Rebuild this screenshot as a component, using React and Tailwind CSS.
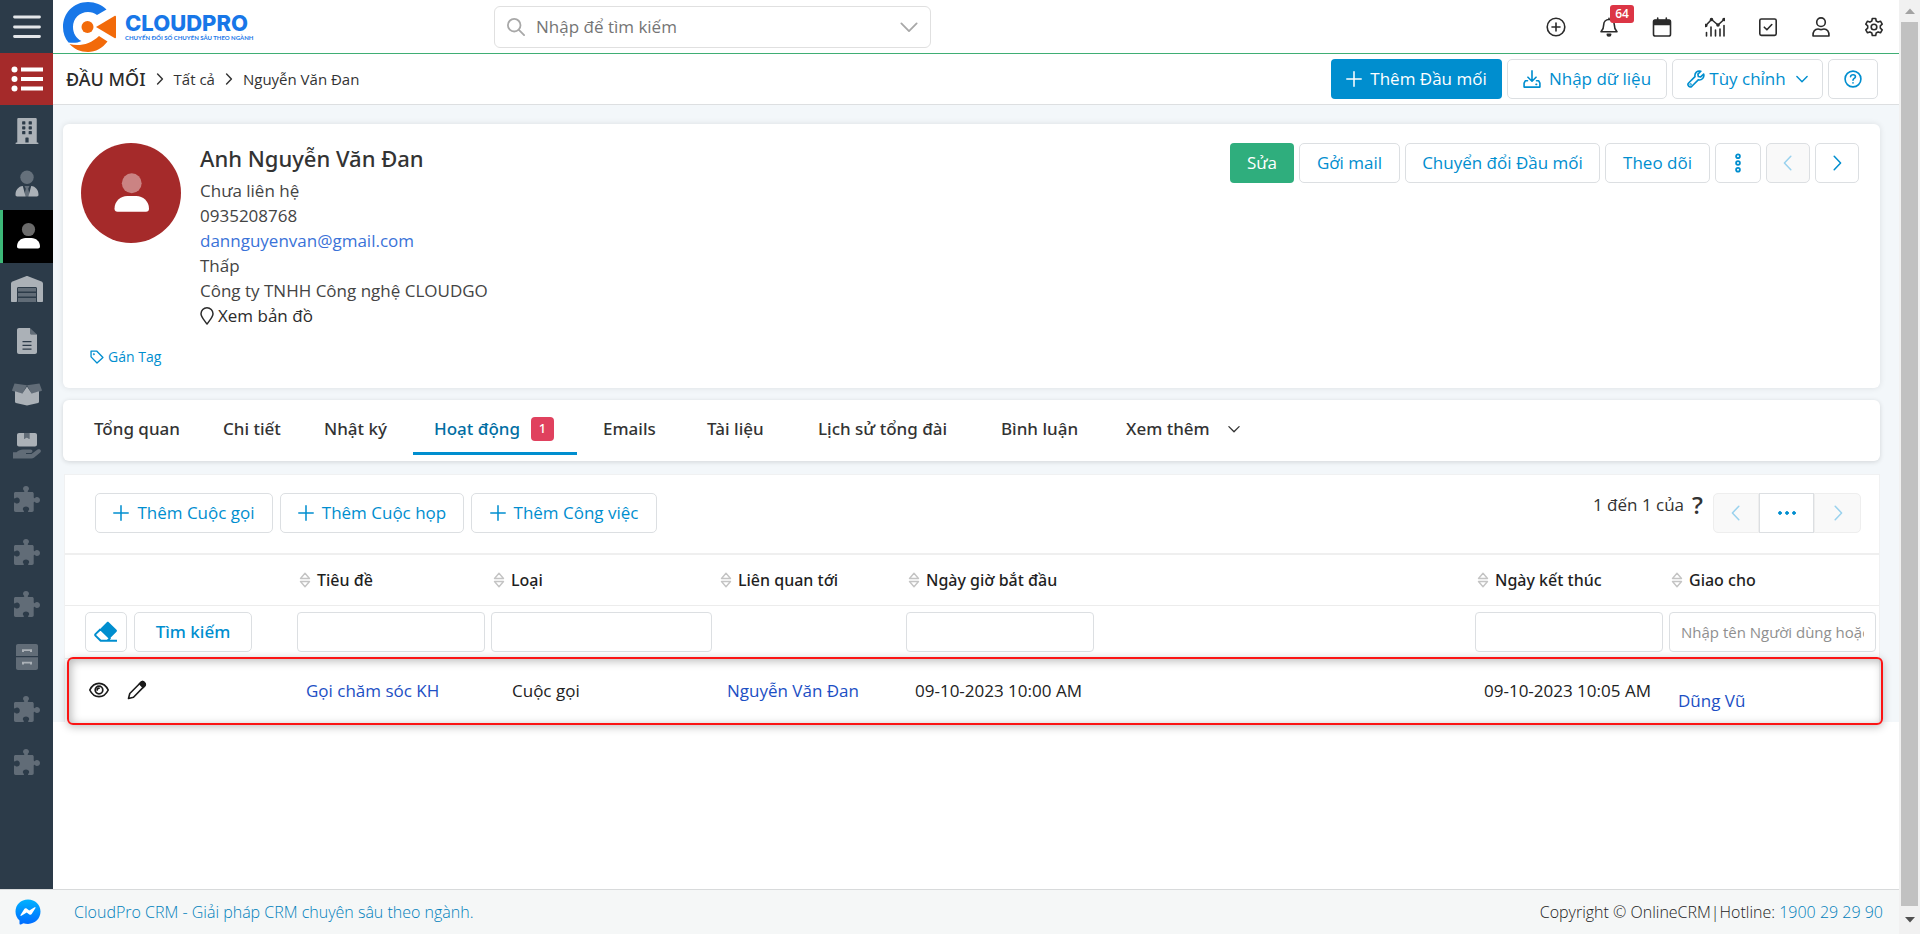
import { FaBuilding } from "react-icons/fa";

/* ---------- icons ---------- */

function Line({ size = "size-5", width = 1.6, children }) {
  return (
    <svg
      viewBox="0 0 20 20"
      className={`${size} shrink-0`}
      fill="none"
      stroke="currentColor"
      strokeWidth={width}
      strokeLinecap="round"
      strokeLinejoin="round"
      aria-hidden="true"
    >
      {children}
    </svg>
  );
}

const Plus = () => (
  <Line size="size-4" width={1.9}>
    <path d="M10 1v18M1 10h18" />
  </Line>
);
const ChevronDown = ({ size = "size-3", width = 2.4 }) => (
  <Line size={size} width={width}>
    <path d="M1.500 6l8.500 8.500L18.500 6" />
  </Line>
);
const ChevronLeft = () => (
  <Line size="size-4" width={1.9}>
    <path d="M13.500 1.500L5.500 10l8 8.500" />
  </Line>
);
const ChevronRight = () => (
  <Line size="size-4" width={1.9}>
    <path d="M6.500 1.500l8 8.500-8 8.500" />
  </Line>
);

const Person = ({ size = "size-7" }) => (
  <svg viewBox="0 0 28 28" className={size} fill="currentColor" aria-hidden="true">
    <circle cx="14.500" cy="7.500" r="6.600" opacity="0.42" />
    <path d="M3 24.500c0-5 4-8.500 8.500-8.500h6c4.500 0 8.500 3.500 8.500 8.500 0 1.300-.8 2-2 2H5c-1.200 0-2-.7-2-2z" />
  </svg>
);
const Tie = () => (
  <svg viewBox="0 0 28 28" className="size-7" fill="currentColor" aria-hidden="true">
    <circle cx="14" cy="7.300" r="6.700" opacity="0.45" />
    <path d="M11.500 16h5l-1.300 2.800 1.500 6.200-1.200 1.500h-3L11.300 25l1.500-6.200z" opacity="0.45" />
    <path d="M9.800 16l2.800 10.500H4.200c-1.100 0-1.700-.7-1.700-1.700 0-5 3-8.400 7.300-8.800zM18.200 16l-2.800 10.500h8.400c1.100 0 1.700-.7 1.700-1.700 0-5-3-8.400-7.300-8.800z" />
  </svg>
);
const Warehouse = () => (
  <svg viewBox="0 0 34 28" className="h-7 w-[34px]" fill="currentColor" aria-hidden="true">
    <path d="M1 8.800c0-1 .6-1.800 1.500-2.200L16 1.200c.6-.3 1.400-.3 2 0l13.500 5.400c.9.400 1.500 1.200 1.500 2.200V26c0 .6-.4 1-1 1h-4c-.6 0-1-.4-1-1V13.500c0-.8-.6-1.500-1.500-1.500H8.500C7.600 12 7 12.700 7 13.500V26c0 .6-.4 1-1 1H2c-.6 0-1-.4-1-1z" />
    <path d="M8 13h18v3.500H8zM8 18h18v3.500H8zM8 23h18v4H8z" opacity="0.42" />
  </svg>
);
const Document = () => (
  <svg viewBox="0 0 22 28" className="h-7 w-[22px]" fill="currentColor" aria-hidden="true">
    <path d="M3 1h11v5c0 .9.700 1.500 1.500 1.500H21V25c0 1.200-.8 2-2 2H3c-1.200 0-2-.8-2-2V3c0-1.200.8-2 2-2zm3.500 13v1.300h9V14zm0 3.700V19h9v-1.300zm0 3.700v1.300h9v-1.300z" />
    <path d="M14 1l7 6.500h-5.500C14.700 7.500 14 6.900 14 6z" opacity="0.42" />
  </svg>
);
const BoxOpen = () => (
  <svg viewBox="0 0 34 26" className="h-6 w-[34px]" fill="currentColor" aria-hidden="true">
    <path d="M4 10l8 2.500L17 5l5 7.500 8-2.500v11.500c0 .6-.4 1-1 1.200L17 25.500 5 22.700c-.6-.2-1-.6-1-1.200z" />
    <path d="M3.500 1.500L17 3.500l-4.500 8.500c-.3.500-.8.700-1.300.5L1.500 9.800c-.6-.2-.8-.7-.6-1.200zM30.500 1.500L17 3.500l4.500 8.500c.3.500.8.700 1.300.5l9.700-2.700c.6-.2.800-.7.600-1.200z" opacity="0.42" />
  </svg>
);
const HandBox = () => (
  <svg viewBox="0 0 30 28" className="h-7 w-[30px]" fill="currentColor" aria-hidden="true">
    <path d="M7 1h5v6l2.700-1.600L17.500 7V1H23c1.200 0 2 .8 2 2v9.500c0 1.200-.8 2-2 2H7c-1.200 0-2-.8-2-2V3c0-1.200.8-2 2-2z" />
    <path d="M12 1h5.500v6l-2.800-1.600L12 7z" opacity="0.42" />
    <path d="M1 20.300h3.500c2-1.800 4-2.800 6.500-2.800h7.500c2.600 0 2.600 3.500 0 3.500H14v.9h5.500l6-4.300c2.500-1.300 4.500 1 2.700 2.900l-6 5c-.8.700-1.800 1-3 1H1z" opacity="0.42" />
  </svg>
);
const Cabinet = () => (
  <svg viewBox="0 0 26 28" className="h-7 w-[26px]" fill="currentColor" aria-hidden="true">
    <path d="M4 1h18c1.200 0 2 .8 2 2v10H2V3c0-1.200.8-2 2-2zM2 14.200h22V25c0 1.200-.8 2-2 2H4c-1.200 0-2-.8-2-2z" opacity="0.42" />
    <path d="M8 6.200h10V9h-2V8h-6v1H8zM8 18.700h10v2.800h-2v-1h-6v1H8z" />
  </svg>
);
const Puzzle = () => (
  <svg viewBox="0 0 26 26" className="size-[26px]" fill="currentColor" aria-hidden="true">
    <path d="M1.500 6H9.500c.8 0 1-.6.600-1.200C9.400 4.200 9 3.600 9 2.800 9 1.200 10.200 0 12 0s3 1.200 3 2.800c0 .8-.4 1.400-1.100 2-.4.600-.2 1.200.6 1.200H18c1 0 1.700.7 1.700 1.700v3.600c0 .8.600 1.100 1.200.6.600-.6 1.200-1 2-1 1.800 0 3.100 1.300 3.100 3.100s-1.300 3.100-3.100 3.100c-.8 0-1.400-.4-2-1-.6-.5-1.200-.2-1.200.6v7.600c0 1-.7 1.700-1.700 1.700h-3.200c-.8 0-1-.6-.5-1.200.5-.5.900-1 .9-1.700 0-1.500-1.400-2.500-3.200-2.500s-3.200 1-3.200 2.500c0 .7.400 1.200.9 1.700.5.600.3 1.200-.5 1.200H1.700C.7 26 0 25.300 0 24.300v-7c0-.8.600-1 1.200-.6.500.5 1 .9 1.900.9 1.600 0 2.700-1.300 2.700-3.100s-1.100-3.100-2.700-3.100c-.9 0-1.400.4-1.900.900-.6.500-1.200.2-1.200-.6V7.500C0 6.700.7 6 1.500 6z" opacity="0.42" />
  </svg>
);

const NAV = [
  ["Tổ chức", <FaBuilding className="size-[26px]" />],
  ["Người liên hệ", <Tie />],
  ["Đầu mối", <Person />],
  ["Kho", <Warehouse />],
  ["Báo giá", <Document />],
  ["Sản phẩm", <BoxOpen />],
  ["Dịch vụ", <HandBox />],
  ["Tiện ích 1", <Puzzle />],
  ["Tiện ích 2", <Puzzle />],
  ["Tiện ích 3", <Puzzle />],
  ["Lưu trữ", <Cabinet />],
  ["Tiện ích 4", <Puzzle />],
  ["Tiện ích 5", <Puzzle />],
];

const TOOLS = [
  ["Tạo nhanh", <><circle cx="10" cy="10" r="8.800" /><path d="M10 6v8M6 10h8" /></>],
  ["Thông báo", <><path d="M10 1.200v1.300M10 2.500c-3.200 0-5.300 2.300-5.300 5.300 0 4.200-1.300 5.300-2.700 6.900h16c-1.400-1.600-2.700-2.700-2.700-6.900 0-3-2.100-5.300-5.300-5.300z" /><path d="M8.300 17.300h3.400a1.700 1.700 0 0 1-3.400 0z" fill="currentColor" /></>],
  ["Lịch", <><rect x="1.500" y="3" width="17" height="16" rx="1.800" /><path d="M2 3.500h16v4H2z" fill="currentColor" /><path d="M5.700 1v2M14.300 1v2" /></>],
  ["Báo cáo", <><path d="M.8 8.500l5.700-6 6.500 5.500 6-5.500M1.500 15.500V19M6 10v9M10.500 13v6M15 12v7M19 8.500V19" /><circle cx=".8" cy="8.500" r="1" fill="currentColor" /><circle cx="6.500" cy="2.500" r="1" fill="currentColor" /><circle cx="13" cy="8" r="1" fill="currentColor" /><circle cx="19" cy="2.500" r="1" fill="currentColor" /></>],
  ["Công việc", <><rect x="1.800" y="2" width="16.400" height="16.400" rx="1.600" /><path d="M6.300 10.200l2.600 2.600L13.800 7.500" /></>],
  ["Tài khoản", <><circle cx="10" cy="5.200" r="4.300" /><path d="M2 19c-.3-4.500 2-7 5-7 1 0 1.500.6 3 .6s2-.6 3-.6c3 0 5.300 2.500 5 7z" /></>],
  ["Cài đặt", <><path d="M8.300 1h3.400l.5 2.500 1.900 1.100 2.400-.9 1.700 3-1.900 1.700v2.200l1.900 1.700-1.700 3-2.400-.9-1.900 1.100-.5 2.500H8.300l-.5-2.500-1.900-1.100-2.400.9-1.700-3 1.900-1.700V8.400L1.800 6.700l1.700-3 2.400.9 1.900-1.100z" transform="translate(0 .5)" /><circle cx="10" cy="10" r="2.800" /></>],
];

function Logo() {
  return (
    <a href="#home" className="flex items-center gap-2" aria-label="CloudPro">
      <svg viewBox="0 0 54 52" className="h-[52px] w-[54px]" aria-hidden="true">
        <path d="M25 1C10.500 1 0 12 0 26c0 6 2 11.500 5.500 15.500 5 .8 9.500.3 13-1.500C13 37.500 10 32 10 26c0-8.500 6.500-15 15-15 3.500 0 6.500 1.200 9 3l9.500-5.500C38.500 3.800 32.500 1 25 1z" fill="#1877e8" />
        <path d="M6.500 43c9 2.600 20.500.7 29.500-8l8.500 5.500C39.500 47 32.500 51 25 51c-7.500 0-14-3-18.500-8z" fill="#f26a0a" />
        <path d="M33 26L51.500 15c.9-.5 1.500-.1 1.500.8v20.400c0 .9-.6 1.300-1.500.8z" fill="#f26a0a" />
        <circle cx="24.500" cy="26" r="6" fill="#f26a0a" />
      </svg>
      <span className="flex flex-col text-[#1877e8]">
        <span className="font-[Inter,sans-serif] text-[22px] leading-[22px] font-extrabold">CLOUDPRO</span>
        <span className="font-[Lato,sans-serif] text-[6px] leading-[8px] font-bold whitespace-nowrap">CHUYỂN ĐỔI SỐ CHUYÊN SÂU THEO NGÀNH</span>
      </span>
    </a>
  );
}

/* ---------- controls ---------- */

function Btn({ className = "", children, ...rest }) {
  return (
    <button
      type="button"
      className={`flex h-10 items-center justify-center rounded-[5px] border border-[#dcdfe2] bg-white text-[17px] whitespace-nowrap text-[#008ecf] disabled:bg-[#f9f9f9] disabled:text-[#9ad2ee] ${className}`}
      {...rest}
    >
      {children}
    </button>
  );
}

const SortIcon = () => (
  <svg viewBox="0 0 12 16" className="h-4 w-3 shrink-0" fill="none" stroke="#c4c4c4" strokeWidth="1.400" strokeLinejoin="round" aria-hidden="true">
    <path d="M1.500 6.500L6 1.200l4.500 5.300zM1.500 9.500L6 14.800l4.500-5.300z" />
  </svg>
);

const TABS = [
  ["Tổng quan", "w-[129px]"],
  ["Chi tiết", "w-[101px]"],
  ["Nhật ký", "w-[110px]"],
  ["Hoạt động", "w-[164px]"],
  ["Emails", "ml-[5px] w-[104px]"],
  ["Tài liệu", "w-[111px]"],
  ["Lịch sử tổng đài", "w-[183px]"],
  ["Bình luận", "w-[125px]"],
  ["Xem thêm", "w-[160px]"],
];

const COLUMNS = [
  ["Tiêu đề", "full"],
  ["Loại", "full"],
  ["Liên quan tới", null],
  ["Ngày giờ bắt đầu", "narrow"],
  ["Ngày kết thúc", "full"],
  ["Giao cho", "full"],
];

function Sidebar() {
  return (
    <aside className="flex w-[53px] shrink-0 flex-col bg-[#2c3b49]">
      <button type="button" aria-label="Mở menu" className="flex h-[53px] items-center justify-center text-[#e3e6e9]">
        <svg viewBox="0 0 28 24" className="h-6 w-7" stroke="currentColor" strokeWidth="2.800" strokeLinecap="round" aria-hidden="true">
          <path d="M1.500 2h25M1.500 12h25M1.500 21.500h25" />
        </svg>
      </button>
      <button type="button" aria-label="Danh sách" className="flex h-[52px] items-center justify-center bg-[#a52a2a] text-white">
        <svg viewBox="0 0 32 26" className="h-[26px] w-8" fill="currentColor" aria-hidden="true">
          <circle cx="3.500" cy="3.500" r="3" />
          <circle cx="3.500" cy="13" r="3" />
          <circle cx="3.500" cy="22.500" r="3" />
          <path d="M10 1.500h22v4H10zM10 11h22v4H10zM10 20.500h22v4H10z" />
        </svg>
      </button>
      <nav className="grid h-[683px] auto-rows-fr" aria-label="Phân hệ">
        {NAV.map(([label, icon]) => (
          <a
            key={label}
            href="#module"
            aria-label={label}
            className={
              label === "Đầu mối"
                ? "flex items-center justify-center border-l-[3px] border-[#3cb878] bg-black text-white"
                : "flex items-center justify-center text-[#abb1b7]"
            }
          >
            {icon}
          </a>
        ))}
      </nav>
    </aside>
  );
}

function TopBar() {
  return (
    <header className="flex h-[54px] items-center border-b border-[#3fae74] bg-white pr-[9px] pl-[10px]">
      <div className="w-[431px] shrink-0">
        <Logo />
      </div>
      <label className="flex h-[42px] w-[437px] items-center rounded-[6px] border border-[#e0e0e0] px-3 text-[#a8a8a8]">
        <Line size="size-[18px]" width={2}>
          <circle cx="8" cy="8" r="7" />
          <path d="M13.200 13.200L19 19" />
        </Line>
        <input aria-label="Tìm kiếm toàn hệ thống" placeholder="Nhập để tìm kiếm" className="ml-[11px] h-10 min-w-0 flex-1 text-[17px] outline-none placeholder:text-[#757575]" />
        <ChevronDown size="size-[18px]" width={2} />
      </label>
      <div className="ml-auto flex items-center gap-[21px] text-[#2b2b2b]">
        {TOOLS.map(([label, art]) => (
          <button key={label} type="button" aria-label={label} className="relative flex w-8 justify-center">
            <Line>{art}</Line>
            {label === "Thông báo" && (
              <span className="absolute -top-3 left-[17px] flex h-[18px] w-6 items-center justify-center rounded-[3px] bg-[#dc3545] text-[12px] leading-[18px] font-semibold text-white">
                64
              </span>
            )}
          </button>
        ))}
      </div>
    </header>
  );
}

function TitleBar() {
  return (
    <div className="flex h-[51px] items-center border-b border-[#dddfe1] bg-white pr-[21px] pl-[13px]">
      <nav aria-label="Đường dẫn" className="flex items-center text-[15px] text-[#333]">
        <h1 className="font-['Noto_Sans',sans-serif] text-[18px] font-medium text-[#2b2b2b]">ĐẦU MỐI</h1>
        <span className="mx-2 flex"><Line size="size-3" width={2.4}><path d="M6 1.500l8 8.500-8 8.500" /></Line></span>
        <a href="#all">Tất cả</a>
        <span className="mx-2 flex"><Line size="size-3" width={2.4}><path d="M6 1.500l8 8.500-8 8.500" /></Line></span>
        <a href="#record">Nguyễn Văn Đan</a>
      </nav>
      <div className="ml-auto flex gap-[5px]">
        <button type="button" className="flex h-10 w-[171px] items-center justify-center gap-2 rounded-[4px] bg-[#008ecf] text-[17px] text-white">
          <Plus /> Thêm Đầu mối
        </button>
        <Btn className="w-[160px] gap-2">
          <Line size="size-[18px]" width={1.8}>
            <path d="M10 1v11M5.500 8l4.500 4.500L14.500 8M5 12H2.500L1.200 14.500V19h17.600v-4.500L17.500 12H15M14.500 16h.6" />
          </Line>
          Nhập dữ liệu
        </Btn>
        <Btn className="w-[151px] gap-1">
          <Line size="size-[18px]" width={1.8}>
            <path d="M18.500 4.500l-3.300 3.200-2.600-.4-.5-2.700L15.400 1.400c-3.800-1.200-7.300 2-6.500 5.900L1.800 14.400c-2.200 2.500 1.200 5.800 3.600 3.700l7.100-7.100c3.900.8 7.200-2.700 6-6.500z" />
            <circle cx="4" cy="16" r=".4" />
          </Line>
          Tùy chỉnh
          <span className="ml-1.5 flex"><ChevronDown /></span>
        </Btn>
        <Btn className="w-[50px]" aria-label="Trợ giúp">
          <Line size="size-[18px]" width={1.8}>
            <circle cx="10" cy="10" r="8.800" />
            <path d="M7.300 7.500c.3-3 5.400-2.900 5.400 0 0 1.800-2.700 2-2.700 3.800M10 14.200v.2" />
          </Line>
        </Btn>
      </div>
    </div>
  );
}

function Summary() {
  return (
    <section className="flex flex-col rounded-[6px] bg-white pt-[19px] pr-[21px] pb-[19px] pl-[18px] shadow-[0_0_6px_rgba(0,0,0,0.1)]">
      <div className="flex items-start">
        <div className="flex size-[100px] shrink-0 items-center justify-center rounded-full bg-[#a52a2a] text-white">
          <Person size="size-[42px]" />
        </div>
        <div className="ml-[19px] text-[17px] leading-[25px] text-[#444]">
          <h2 className="mb-[5px] font-['Noto_Sans',sans-serif] text-[22px] leading-[30px] font-medium text-[#333]">Anh Nguyễn Văn Đan</h2>
          <p>Chưa liên hệ</p>
          <p>0935208768</p>
          <p><a href="mailto:dannguyenvan@gmail.com" className="text-[#3a72d8]">dannguyenvan@gmail.com</a></p>
          <p>Thấp</p>
          <p>Công ty TNHH Công nghệ CLOUDGO</p>
          <a href="#map" className="flex items-center gap-1 text-[#2b2b2b]">
            <svg viewBox="0 0 14 18" className="h-[18px] w-[14px]" fill="none" stroke="currentColor" strokeWidth="1.500" strokeLinejoin="round" aria-hidden="true">
              <path d="M7 17C4 12.800 1 10 1 6.800a6 6 0 0 1 12 0C13 10 10 12.800 7 17z" />
            </svg>
            Xem bản đồ
          </a>
        </div>
        <div className="ml-auto flex gap-[5px]">
          <button type="button" className="flex h-10 w-16 items-center justify-center rounded-[4px] bg-[#2fae7d] text-[17px] text-white">Sửa</button>
          <Btn className="w-[101px]">Gởi mail</Btn>
          <Btn className="w-[195px]">Chuyển đổi Đầu mối</Btn>
          <Btn className="w-[105px]">Theo dõi</Btn>
          <Btn className="w-[46px]" aria-label="Thêm thao tác">
            <Line size="size-5" width={1.8}>
              <circle cx="10" cy="3.200" r="1.900" />
              <circle cx="10" cy="10" r="1.900" />
              <circle cx="10" cy="16.800" r="1.900" />
            </Line>
          </Btn>
          <Btn className="w-[44px]" disabled aria-label="Bản ghi trước"><ChevronLeft /></Btn>
          <Btn className="w-[44px]" aria-label="Bản ghi sau"><ChevronRight /></Btn>
        </div>
      </div>
      <button type="button" className="mt-[17px] ml-[9px] flex items-center gap-1 self-start text-[14px] leading-6 text-[#008ecf]">
        <Line size="size-[14px]" width={1.9}>
          <path d="M1.500 1.500v8.300l8.500 8.700 8.500-7.700-9-9.300z" />
          <circle cx="5.500" cy="6" r=".5" />
        </Line>
        Gán Tag
      </button>
    </section>
  );
}

function Tabs() {
  return (
    <div role="tablist" className="flex h-[61px] rounded-[6px] bg-white pt-[5px] pl-[10px] shadow-[0_1px_5px_rgba(0,0,0,0.14)]">
      {TABS.map(([label, width]) => {
        const active = label === "Hoạt động";
        return (
          <button
            key={label}
            type="button"
            role="tab"
            aria-selected={active}
            className={`flex h-[50px] shrink-0 items-center border-b-[3px] pl-[21px] font-['Noto_Sans',sans-serif] text-[17px] font-medium whitespace-nowrap ${width} ${
              active ? "border-[#008ecf] text-[#006ea3]" : "border-transparent text-[#333]"
            }`}
          >
            {label}
            {active && <span className="ml-[11px] flex h-6 w-[23px] items-center justify-center rounded-[4px] bg-[#e0415e] text-[13px] text-white">1</span>}
            {label === "Xem thêm" && <span className="ml-[18px] flex"><ChevronDown width={2.2} /></span>}
          </button>
        );
      })}
    </div>
  );
}

function Activities() {
  const field = "block h-10 w-full rounded-[4px] border border-[#dcdfe2] bg-white px-[11px] text-[15px] outline-none placeholder:text-[#8f8f8f]";
  return (
    <section className="relative ml-px border border-[#f0f1f2] border-b-0 bg-white">
      <div className="flex h-[78px] items-start pt-[18px] pr-[18px] pl-[30px]">
        <div className="flex gap-[7px]">
          <Btn className="w-[178px] gap-2"><Plus /> Thêm Cuộc gọi</Btn>
          <Btn className="w-[184px] gap-2"><Plus /> Thêm Cuộc họp</Btn>
          <Btn className="w-[186px] gap-2"><Plus /> Thêm Công việc</Btn>
        </div>
        <div className="ml-auto flex items-start">
          <p className="flex items-center gap-2 pr-[10px] text-[17px] leading-6 text-[#333]">
            1 đến 1 của <b className="text-[24px] leading-6 font-semibold">?</b>
          </p>
          <div className="flex">
            <Btn className="w-[46px] rounded-r-none border-[#eeeeee]" disabled aria-label="Trang trước"><ChevronLeft /></Btn>
            <Btn className="w-[55px] rounded-none" aria-label="Chọn trang">
              <Line width={1}>
                <circle cx="3" cy="10" r="1.400" fill="currentColor" />
                <circle cx="10" cy="10" r="1.400" fill="currentColor" />
                <circle cx="17" cy="10" r="1.400" fill="currentColor" />
              </Line>
            </Btn>
            <Btn className="w-[47px] rounded-l-none border-[#eeeeee]" disabled aria-label="Trang sau"><ChevronRight /></Btn>
          </div>
        </div>
      </div>
      <table className="w-full table-fixed border-collapse text-left">
        <colgroup>
          <col className="w-[229px]" />
          <col className="w-[194px]" />
          <col className="w-[227px]" />
          <col className="w-[188px]" />
          <col />
          <col className="w-[194px]" />
          <col className="w-[213px]" />
        </colgroup>
        <thead>
          <tr className="h-[51px] border-t-2 border-b border-t-[#efefef] border-b-[#ececec]">
            <td />
            {COLUMNS.map(([label]) => (
              <th key={label} scope="col" className="pl-[5px] font-['Noto_Sans',sans-serif] text-[16px] font-medium whitespace-nowrap text-[#1f1f1f]">
                <span className="flex items-center gap-1.5"><SortIcon />{label}</span>
              </th>
            ))}
          </tr>
          <tr className="h-[53px] border-b border-[#ececec]">
            <td className="pl-5">
              <div className="flex gap-[7px]">
                <Btn className="w-[42px]" aria-label="Xóa bộ lọc">
                  <svg viewBox="0 0 24 22" className="h-[22px] w-6" fill="currentColor" aria-hidden="true">
                    <path d="M12.800 1.200c.6-.6 1.400-.6 2 0l7.700 7.600c.6.600.6 1.400 0 2L16 17.300 6.300 7.700z" />
                    <path d="M6.500 8.200l-4.800 4.700c-.6.600-.6 1.400 0 2l5 4.900h16.300M6.500 8.200l9.300 9.200-2.400 2.400" fill="none" stroke="currentColor" strokeWidth="2" strokeLinejoin="round" />
                  </svg>
                </Btn>
                <Btn className="w-[118px] font-['Noto_Sans',sans-serif] font-medium">Tìm kiếm</Btn>
              </div>
            </td>
            {COLUMNS.map(([label, kind]) => (
              <td key={label} className="px-[3px]">
                {kind && (
                  <div className={kind === "narrow" ? "w-[188px]" : "w-full"}>
                    <input
                      aria-label={`Lọc theo ${label}`}
                      className={field}
                      placeholder={label === "Giao cho" ? "Nhập tên Người dùng hoặc nhóm" : undefined}
                    />
                  </div>
                )}
              </td>
            ))}
          </tr>
        </thead>
        <tbody>
          <tr className="h-[64px] text-[17px] whitespace-nowrap text-[#222]">
            <td className="pl-[24px]">
              <div className="flex gap-[18px] text-[#1a1a1a]">
                <button type="button" aria-label="Xem nhanh">
                  <Line width={1.7}>
                    <path d="M.8 10C2.800 5.800 6 3.300 10 3.300s7.200 2.500 9.200 6.700c-2 4.200-5.200 6.700-9.200 6.700S2.800 14.200.8 10z" />
                    <circle cx="10" cy="10" r="3.800" />
                    <path d="M10 8.200a1.800 1.800 0 0 0-1.800 1.800" />
                  </Line>
                </button>
                <button type="button" aria-label="Chỉnh sửa">
                  <Line width={1.6}>
                    <path d="M1.500 18.500l1.300-5L14 2.300c1.900-1.800 5.400 1.700 3.600 3.600L6.500 17.200z" />
                    <path d="M12.500 3.800l1.900-1.700c1.900-1.500 5 1.500 3.400 3.500l-1.700 1.900z" fill="currentColor" />
                  </Line>
                </button>
              </div>
            </td>
            <td className="pl-3"><a href="#call" className="text-[#1c4fc4]">Gọi chăm sóc KH</a></td>
            <td className="pl-6">Cuộc gọi</td>
            <td className="pl-3"><a href="#lead" className="text-[#1c4fc4]">Nguyễn Văn Đan</a></td>
            <td className="pl-3">09-10-2023 10:00 AM</td>
            <td className="pl-3">09-10-2023 10:05 AM</td>
            <td className="pt-5 pl-3"><a href="#user" className="text-[#1c4fc4]">Dũng Vũ</a></td>
          </tr>
        </tbody>
      </table>
      <div className="pointer-events-none absolute -right-1 -bottom-[3px] left-[2px] h-[68px] rounded-[6px] border-2 border-[#fb1414] shadow-[0_2px_8px_rgba(0,0,0,0.25),inset_2px_2px_10px_rgba(0,0,0,0.28)]" />
    </section>
  );
}

function Footer() {
  return (
    <footer className="flex h-[45px] items-center border-t border-[#d8dadb] bg-[#f5f7f7] pr-4 pl-[15px] text-[16px] font-light text-[#222]">
      <svg viewBox="0 0 26 26" className="size-[26px]" role="img" aria-label="Messenger">
        <defs>
          <linearGradient id="chat" x1="0" y1="0" x2="0" y2="1">
            <stop offset="0" stopColor="#00b2ff" />
            <stop offset="1" stopColor="#006aff" />
          </linearGradient>
        </defs>
        <path d="M13 .5C5.800.5.500 5.800.500 12.600c0 3.700 1.500 6.800 4 9v3c0 .8.700 1.200 1.400.900l2.600-1.200c1.400.4 2.900.6 4.500.6 7.200 0 12.500-5.400 12.500-12.300S20.200.5 13 .5z" fill="url(#chat)" />
        <path d="M5.500 16l3.800-6c.5-.8 1.500-1 2.300-.4l2.700 2 5.300-3.300c.700-.4 1.300.1.900.800l-3.800 6c-.5.800-1.500 1-2.300.4l-2.700-2-5.300 3.300c-.7.400-1.300-.1-.9-.8z" fill="#fff" />
      </svg>
      <a href="#product" className="ml-[33px] text-[#0080bb]">CloudPro CRM - Giải pháp CRM chuyên sâu theo ngành.</a>
      <p className="ml-auto">
        Copyright © OnlineCRM|Hotline: <a href="tel:1900292990" className="text-[#0080bb]">1900 29 29 90</a>
      </p>
    </footer>
  );
}

function ScrollRail() {
  return (
    <div className="flex w-[21px] shrink-0 flex-col items-center bg-[#f1f1f1]" aria-hidden="true">
      <svg viewBox="0 0 10 6" className="my-2 h-[6px] w-[10px]"><path d="M0 6l5-5.500L10 6z" fill="#a3a3a3" /></svg>
      <div className="w-[17px] flex-1 bg-[#c1c1c1]" />
      <svg viewBox="0 0 10 6" className="my-[11px] h-[6px] w-[10px]"><path d="M0 0l5 5.500L10 0z" fill="#505050" /></svg>
    </div>
  );
}

export default function App() {
  return (
    <div className="flex min-h-screen bg-white font-['Open_Sans','Noto_Sans',sans-serif]">
      <div className="flex min-w-0 flex-1 flex-col">
        <div className="flex flex-1">
          <Sidebar />
          <div className="flex min-w-0 flex-1 flex-col">
            <TopBar />
            <TitleBar />
            <main className="flex flex-col bg-[#f3f7fa] pt-[19px] pr-[19px] pl-[10px]">
              <Summary />
              <div className="mt-3"><Tabs /></div>
              <div className="mt-[13px]"><Activities /></div>
            </main>
          </div>
        </div>
        <Footer />
      </div>
      <ScrollRail />
    </div>
  );
}
